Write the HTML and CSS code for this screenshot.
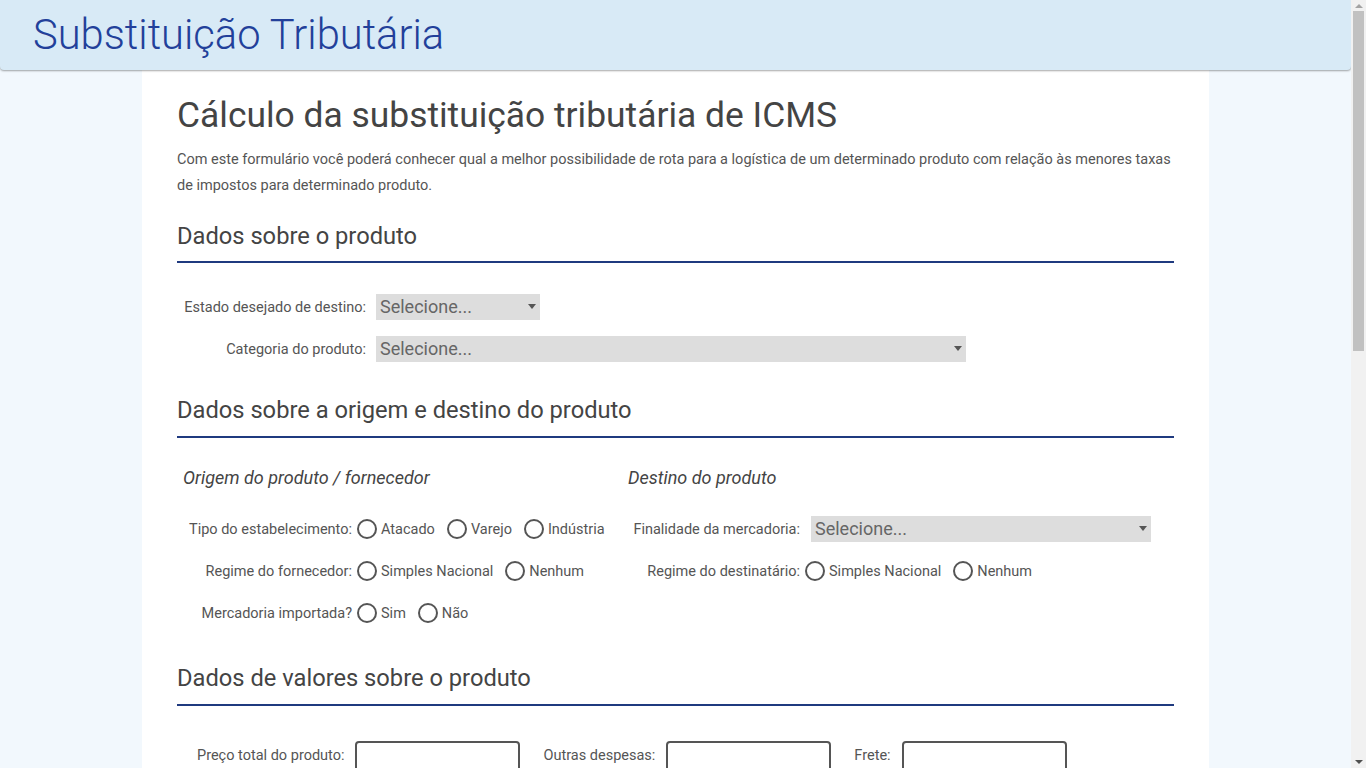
FILE: index.html
```html
<!DOCTYPE html>
<html lang="pt-BR">
<head>
<meta charset="utf-8">
<title>Substituição Tributária</title>
<link rel="stylesheet" href="styles.css">
</head>
<body>
<header class="topbar">
  <div class="brand">Substituição Tributária</div>
</header>
<main class="page">
  <h1 class="title">Cálculo da substituição tributária de ICMS</h1>
  <p class="intro">Com este formulário você poderá conhecer qual a melhor possibilidade de rota para a logística de um determinado produto com relação às menores taxas de impostos para determinado produto.</p>

  <section class="sec sec-1">
    <h2 class="sec-title">Dados sobre o produto</h2>
    <div class="rows rows-1">
      <div class="row">
        <label class="lbl lbl-w1">Estado desejado de destino:</label>
        <span class="sel sel-sm"><select><option>Selecione...</option></select></span>
      </div>
      <div class="row">
        <label class="lbl lbl-w1">Categoria do produto:</label>
        <span class="sel sel-lg"><select><option>Selecione...</option></select></span>
      </div>
    </div>
  </section>

  <section class="sec sec-2">
    <h2 class="sec-title sec-title-2">Dados sobre a origem e destino do produto</h2>
    <div class="cols">
      <div class="col">
        <h3 class="sub">Origem do produto / fornecedor</h3>
        <div class="row">
          <label class="lbl lbl-w2">Tipo do estabelecimento:</label>
          <span class="radio"><span class="dot"></span>Atacado</span>
          <span class="radio"><span class="dot"></span>Varejo</span>
          <span class="radio"><span class="dot"></span>Indústria</span>
        </div>
        <div class="row">
          <label class="lbl lbl-w2">Regime do fornecedor:</label>
          <span class="radio"><span class="dot"></span>Simples Nacional</span>
          <span class="radio"><span class="dot"></span>Nenhum</span>
        </div>
        <div class="row">
          <label class="lbl lbl-w2">Mercadoria importada?</label>
          <span class="radio"><span class="dot"></span>Sim</span>
          <span class="radio"><span class="dot"></span>Não</span>
        </div>
      </div>
      <div class="col">
        <h3 class="sub">Destino do produto</h3>
        <div class="row">
          <label class="lbl lbl-w3 lbl-sel">Finalidade da mercadoria:</label>
          <span class="sel sel-md"><select><option>Selecione...</option></select></span>
        </div>
        <div class="row">
          <label class="lbl lbl-w3">Regime do destinatário:</label>
          <span class="radio"><span class="dot"></span>Simples Nacional</span>
          <span class="radio"><span class="dot"></span>Nenhum</span>
        </div>
      </div>
    </div>
  </section>

  <section class="sec sec-3">
    <h2 class="sec-title sec-title-3">Dados de valores sobre o produto</h2>
    <div class="values">
      <div class="field"><label class="vlbl">Preço total do produto:</label><input class="txt" type="text"></div>
      <div class="field"><label class="vlbl">Outras despesas:</label><input class="txt" type="text"></div>
      <div class="field"><label class="vlbl">Frete:</label><input class="txt" type="text"></div>
    </div>
  </section>
</main>
<div class="scrollbar" aria-hidden="true">
  <span class="sb-up"></span>
  <span class="sb-thumb"></span>
  <span class="sb-down"></span>
</div>
</body>
</html>
```

FILE: styles.css
```css
html, body {
  margin: 0;
  padding: 0;
}
html {
  scrollbar-width: none;
}
html::-webkit-scrollbar { display: none; }
body {
  background: #f2f8fd;
  font-family: Roboto, "Liberation Sans", sans-serif;
  color: #555;
  margin-right: 15px;
}
.topbar {
  height: 70px;
  background: #d8eaf6;
  border-radius: 0 0 4px 4px;
  box-shadow: 0 1px 2px rgba(0,0,0,0.35);
  box-sizing: border-box;
  padding-left: 33px;
  position: relative;
  z-index: 1;
}
.brand {
  font-size: 41.7px;
  font-weight: 300;
  color: #22409a;
  line-height: 70px;
}
.page {
  width: 1067px;
  margin: 0 auto;
  background: #fff;
  box-sizing: border-box;
  padding: 24px 35px 900px;
}
.title {
  margin: 0;
  font-size: 35.4px;
  font-weight: 400;
  line-height: 43px;
  color: #444;
}
.intro {
  margin: 10px 0 0;
  font-size: 14.5px;
  line-height: 26px;
  color: #555;
}
.sec-title {
  margin: 0;
  font-size: 23.7px;
  font-weight: 400;
  line-height: 28px;
  color: #444;
  padding-bottom: 11px;
  border-bottom: 2px solid #1f3a7f;
}
.sec-title-2, .sec-title-3 { padding-bottom: 12px; }
.sec-1 { margin-top: 23px; }
.sec-2 { margin-top: 26px; }
.sec-3 { margin-top: 30px; }
.rows-1 { padding-top: 23px; }
.row {
  display: flex;
  align-items: center;
  height: 42px;
}
.lbl {
  font-size: 14.5px;
  color: #555;
  text-align: right;
  flex: none;
  white-space: nowrap;
}
.lbl-w1 { width: 189px; margin-right: 10px; }
.lbl-w2 { width: 169px; margin-right: 5px; }
.lbl-w3 { width: 172px; margin-right: 5px; }
.lbl-sel { margin-right: 11px; }
.sel {
  position: relative;
  display: inline-block;
  height: 26px;
  background: #ddd;
}
.sel select {
  appearance: none;
  -webkit-appearance: none;
  border: none;
  background: transparent;
  width: 100%;
  height: 26px;
  font-family: Roboto, "Liberation Sans", sans-serif;
  font-size: 18px;
  color: #666;
  padding: 0 0 1px 4px;
  margin: 0;
  outline: none;
}
.sel::after {
  content: "";
  position: absolute;
  right: 4px;
  top: 10px;
  border-left: 4px solid transparent;
  border-right: 4px solid transparent;
  border-top: 5px solid #555;
  pointer-events: none;
}
.sel-sm { width: 164px; }
.sel-lg { width: 590px; }
.sel-md { width: 340px; }
.cols {
  display: grid;
  grid-template-columns: 445px 1fr;
  padding: 28px 6px 0;
}
.sub {
  margin: 0 0 18px;
  font-size: 18px;
  font-style: italic;
  font-weight: 400;
  line-height: 24px;
  color: #444;
}
.radio {
  display: inline-flex;
  align-items: center;
  font-size: 14.5px;
  color: #555;
  margin-right: 12px;
  white-space: nowrap;
}
.dot {
  width: 16px;
  height: 16px;
  border: 2px solid #555;
  border-radius: 50%;
  margin-right: 4px;
  flex: none;
}
.values {
  display: flex;
  align-items: center;
  gap: 23px;
  padding: 35px 0 0 20px;
}
.field {
  display: flex;
  align-items: center;
}
.vlbl {
  font-size: 14.5px;
  color: #555;
  margin-right: 11px;
  margin-bottom: 6px;
  white-space: nowrap;
}
.txt {
  width: 165px;
  height: 34px;
  box-sizing: border-box;
  border: 2px solid #555;
  border-radius: 4px;
  background: #fff;
  font-size: 14px;
  padding: 0 6px;
  margin: 0;
  outline: none;
}
.scrollbar {
  position: fixed;
  top: 0;
  right: 0;
  width: 15px;
  height: 100vh;
  background: #f1f1f1;
  z-index: 10;
}
.sb-thumb {
  position: absolute;
  left: 2px;
  right: 2px;
  top: 11px;
  height: 340px;
  background: #c1c1c1;
}
.sb-up, .sb-down {
  position: absolute;
  left: 4px;
  border-left: 4px solid transparent;
  border-right: 4px solid transparent;
}
.sb-up {
  top: 4px;
  border-bottom: 4px solid #a3a3a3;
}
.sb-down {
  bottom: 4px;
  border-top: 4px solid #505050;
}
```
